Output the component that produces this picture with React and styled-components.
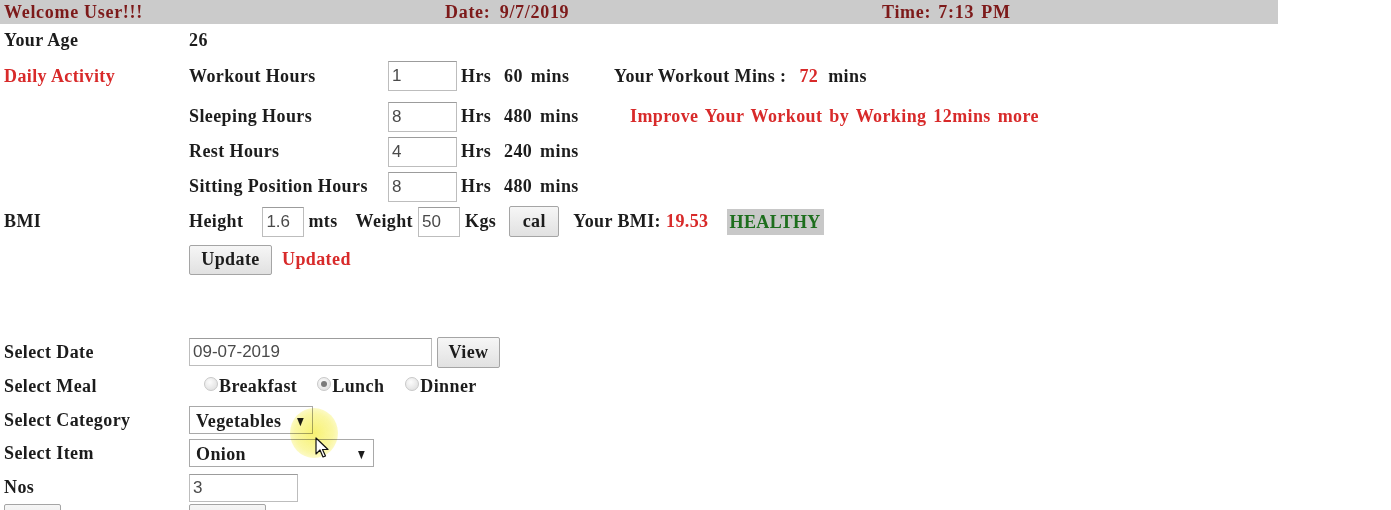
import styled, { createGlobalStyle } from 'styled-components';

const GlobalStyle = createGlobalStyle`
  body {
    margin: 0;
    background: #ffffff;
    font-family: "Liberation Serif", "Times New Roman", serif;
    font-weight: bold;
    font-size: 18px;
    letter-spacing: 0.4px;
    color: #1c1c1c;
  }
`;

const Page = styled.div`
  position: relative;
  width: 1391px;
  height: 510px;
  overflow: hidden;
`;

const TopBar = styled.div`
  width: 1278px;
  height: 24px;
  background: #cbcbcb;
  display: grid;
  grid-template-columns: 441px 437px 1fr;
  align-items: center;
  color: #7d1a1a;
  padding-left: 4px;
  box-sizing: border-box;
  letter-spacing: 0.7px;
`;

const TopText = styled.span`
  line-height: 22px;
  word-spacing: ${({ $ws }) => $ws || 0}px;
`;

const Form = styled.div`
  display: grid;
  grid-template-columns: 185px 1fr;
  padding-left: 4px;
  align-items: start;
`;

const Label = styled.div`
  height: ${({ $h }) => $h || 35}px;
  display: flex;
  align-items: center;
  color: ${({ $red }) => ($red ? '#d82a2a' : '#1c1c1c')};
`;

const Cell = styled.div`
  display: flex;
  flex-direction: column;
`;

const Line = styled.div`
  display: flex;
  align-items: center;
  box-sizing: border-box;
  height: ${({ $h }) => $h || 35}px;
  padding-bottom: ${({ $pb }) => $pb || 0}px;
`;

const ActLabel = styled.span`
  width: 199px;
`;

const TextBox = styled.input`
  width: ${({ $w }) => $w}px;
  height: ${({ $hh }) => $hh || 30}px;
  box-sizing: border-box;
  border: 1px solid #bdbdbd;
  border-top-color: #9c9c9c;
  padding: 0 3px;
  font-family: "Liberation Sans", Arial, sans-serif;
  font-size: 17px;
  font-weight: normal;
  letter-spacing: 0;
  color: #4a4a4a;
  background: #fff;
  margin: ${({ $m }) => $m || '0'};
`;

const Hrs = styled.span`
  width: 43px;
  padding-left: 4px;
`;

const Mins = styled.span`
  width: 110px;
  word-spacing: 3px;
`;

const Red = styled.span`
  color: #d82a2a;
  margin: ${({ $m }) => $m || '0'};
  word-spacing: ${({ $ws }) => $ws || 0}px;
`;

const Word = styled.span`
  margin: ${({ $m }) => $m || '0'};
`;

const Healthy = styled.span`
  background: #c8c8c8;
  color: #1d6e1d;
  padding: 2px 3px;
  margin-left: 18px;
  line-height: 22px;
`;

const Btn = styled.button`
  height: ${({ $h }) => $h || 31}px;
  width: ${({ $w }) => $w}px;
  box-sizing: border-box;
  border: 1px solid #a5a5a5;
  border-radius: 2px;
  background: linear-gradient(#f6f6f6, #e1e1e1);
  font-family: "Liberation Serif", "Times New Roman", serif;
  font-weight: bold;
  font-size: 18px;
  letter-spacing: 0.4px;
  color: #1c1c1c;
  padding: 0;
  margin: ${({ $m }) => $m || '0'};
`;

const Radio = styled.span`
  width: 14px;
  height: 14px;
  border-radius: 50%;
  border: 1px solid #c8c8c8;
  background: radial-gradient(circle at 40% 35%, #fcfcfc, #dadada);
  box-sizing: border-box;
  display: inline-flex;
  align-items: center;
  justify-content: center;
  margin: 0 1px 0 ${({ $ml }) => $ml || 0}px;
  position: relative;
  top: -3px;
  &::after {
    content: '';
    display: ${({ $on }) => ($on ? 'block' : 'none')};
    width: 6px;
    height: 6px;
    border-radius: 50%;
    background: #7a7a7a;
  }
`;

const Select = styled.div`
  width: ${({ $w }) => $w}px;
  height: 28px;
  box-sizing: border-box;
  border: 1px solid #a9a9a9;
  display: flex;
  align-items: center;
  justify-content: space-between;
  padding: 2px 7px 0 6px;
  background: #fff;
`;

const Arrow = styled.span`
  font-size: 11px;
  font-family: "DejaVu Sans", sans-serif;
  transform: scaleX(0.8);
`;

const Spacer = styled.div`
  height: ${({ $h }) => $h}px;
  grid-column: 1 / span 2;
`;

const Glow = styled.div`
  position: absolute;
  left: 290px;
  top: 408px;
  width: 48px;
  height: 50px;
  border-radius: 50%;
  background: radial-gradient(circle, rgba(246, 240, 90, 0.85) 0%, rgba(246, 240, 90, 0.55) 55%, rgba(246, 240, 90, 0) 100%);
  mix-blend-mode: multiply;
  pointer-events: none;
`;

const Cursor = styled.svg`
  position: absolute;
  left: 315px;
  top: 437px;
  pointer-events: none;
`;

export default function App() {
  return (
    <Page>
      <GlobalStyle />
      <TopBar>
        <TopText>Welcome User!!!</TopText>
        <TopText $ws={4}>Date: 9/7/2019</TopText>
        <TopText $ws={2}>Time: 7:13 PM</TopText>
      </TopBar>
      <Form>
        <Label $h={33}>Your Age</Label>
        <Line $h={33}>26</Line>

        <Label $h={38} $red>Daily Activity</Label>
        <Cell>
          <Line $h={42} $pb={4}>
            <ActLabel>Workout Hours</ActLabel>
            <TextBox $w={69} defaultValue="1" />
            <Hrs>Hrs</Hrs>
            <Mins>60 mins</Mins>
            <span>
              Your Workout Mins : <Red $m="0 0 0 8px">72</Red>
              <Word $m="0 0 0 10px">mins</Word>
            </span>
          </Line>
          <Line>
            <ActLabel>Sleeping Hours</ActLabel>
            <TextBox $w={69} defaultValue="8" />
            <Hrs>Hrs</Hrs>
            <Mins>480 mins</Mins>
            <Red $m="0 0 0 16px" $ws={2}>Improve Your Workout by Working 12mins more</Red>
          </Line>
          <Line>
            <ActLabel>Rest Hours</ActLabel>
            <TextBox $w={69} defaultValue="4" />
            <Hrs>Hrs</Hrs>
            <Mins>240 mins</Mins>
          </Line>
          <Line>
            <ActLabel>Sitting Position Hours</ActLabel>
            <TextBox $w={69} defaultValue="8" />
            <Hrs>Hrs</Hrs>
            <Mins>480 mins</Mins>
          </Line>
        </Cell>

        <Label $h={35}>BMI</Label>
        <Cell>
          <Line $h={35}>
            <Word>Height</Word>
            <TextBox $w={42} $m="0 4px 0 19px" defaultValue="1.6" />
            <Word>mts</Word>
            <Word $m="0 5px 0 18px">Weight</Word>
            <TextBox $w={42} $m="0 5px 0 0" defaultValue="50" />
            <Word>Kgs</Word>
            <Btn $w={50} $m="0 0 0 13px">cal</Btn>
            <Word $m="0 0 0 14px">Your BMI:</Word>
            <Red $m="0 0 0 5px">19.53</Red>
            <Healthy>HEALTHY</Healthy>
          </Line>
          <Line $h={41}>
            <Btn $w={83} $h={30}>Update</Btn>
            <Red $m="0 0 0 10px">Updated</Red>
          </Line>
        </Cell>

        <Spacer $h={55} />

        <Label $h={34}>Select Date</Label>
        <Line $h={34}>
          <TextBox $w={243} $hh={28} defaultValue="09-07-2019" />
          <Btn $w={63} $m="0 0 0 5px">View</Btn>
        </Line>

        <Label $h={35}>Select Meal</Label>
        <Line $h={35}>
          <Radio $ml={15} />
          <Word>Breakfast</Word>
          <Radio $ml={20} $on />
          <Word>Lunch</Word>
          <Radio $ml={21} />
          <Word>Dinner</Word>
        </Line>

        <Label $h={32}>Select Category</Label>
        <Line $h={32}>
          <Select $w={124}>
            <span>Vegetables</span>
            <Arrow>▼</Arrow>
          </Select>
        </Line>

        <Label $h={34}>Select Item</Label>
        <Line $h={34}>
          <Select $w={185}>
            <span>Onion</span>
            <Arrow>▼</Arrow>
          </Select>
        </Line>

        <Label $h={35}>Nos</Label>
        <Line $h={35}>
          <TextBox $w={109} $hh={28} defaultValue="3" />
        </Line>

        <Line $h={20}>
          <Btn $w={57} $m="8px 0 0 0" />
        </Line>
        <Line $h={20}>
          <Btn $w={77} $m="8px 0 0 0" />
        </Line>
      </Form>
      <Glow />
      <Cursor width="14" height="22" viewBox="0 0 14 22">
        <path d="M1 1 L1 17 L5 13 L8 20 L10.5 19 L7.5 12.5 L13 12.5 Z" fill="#fff" stroke="#111" strokeWidth="1.2" strokeLinejoin="round" />
      </Cursor>
    </Page>
  );
}
